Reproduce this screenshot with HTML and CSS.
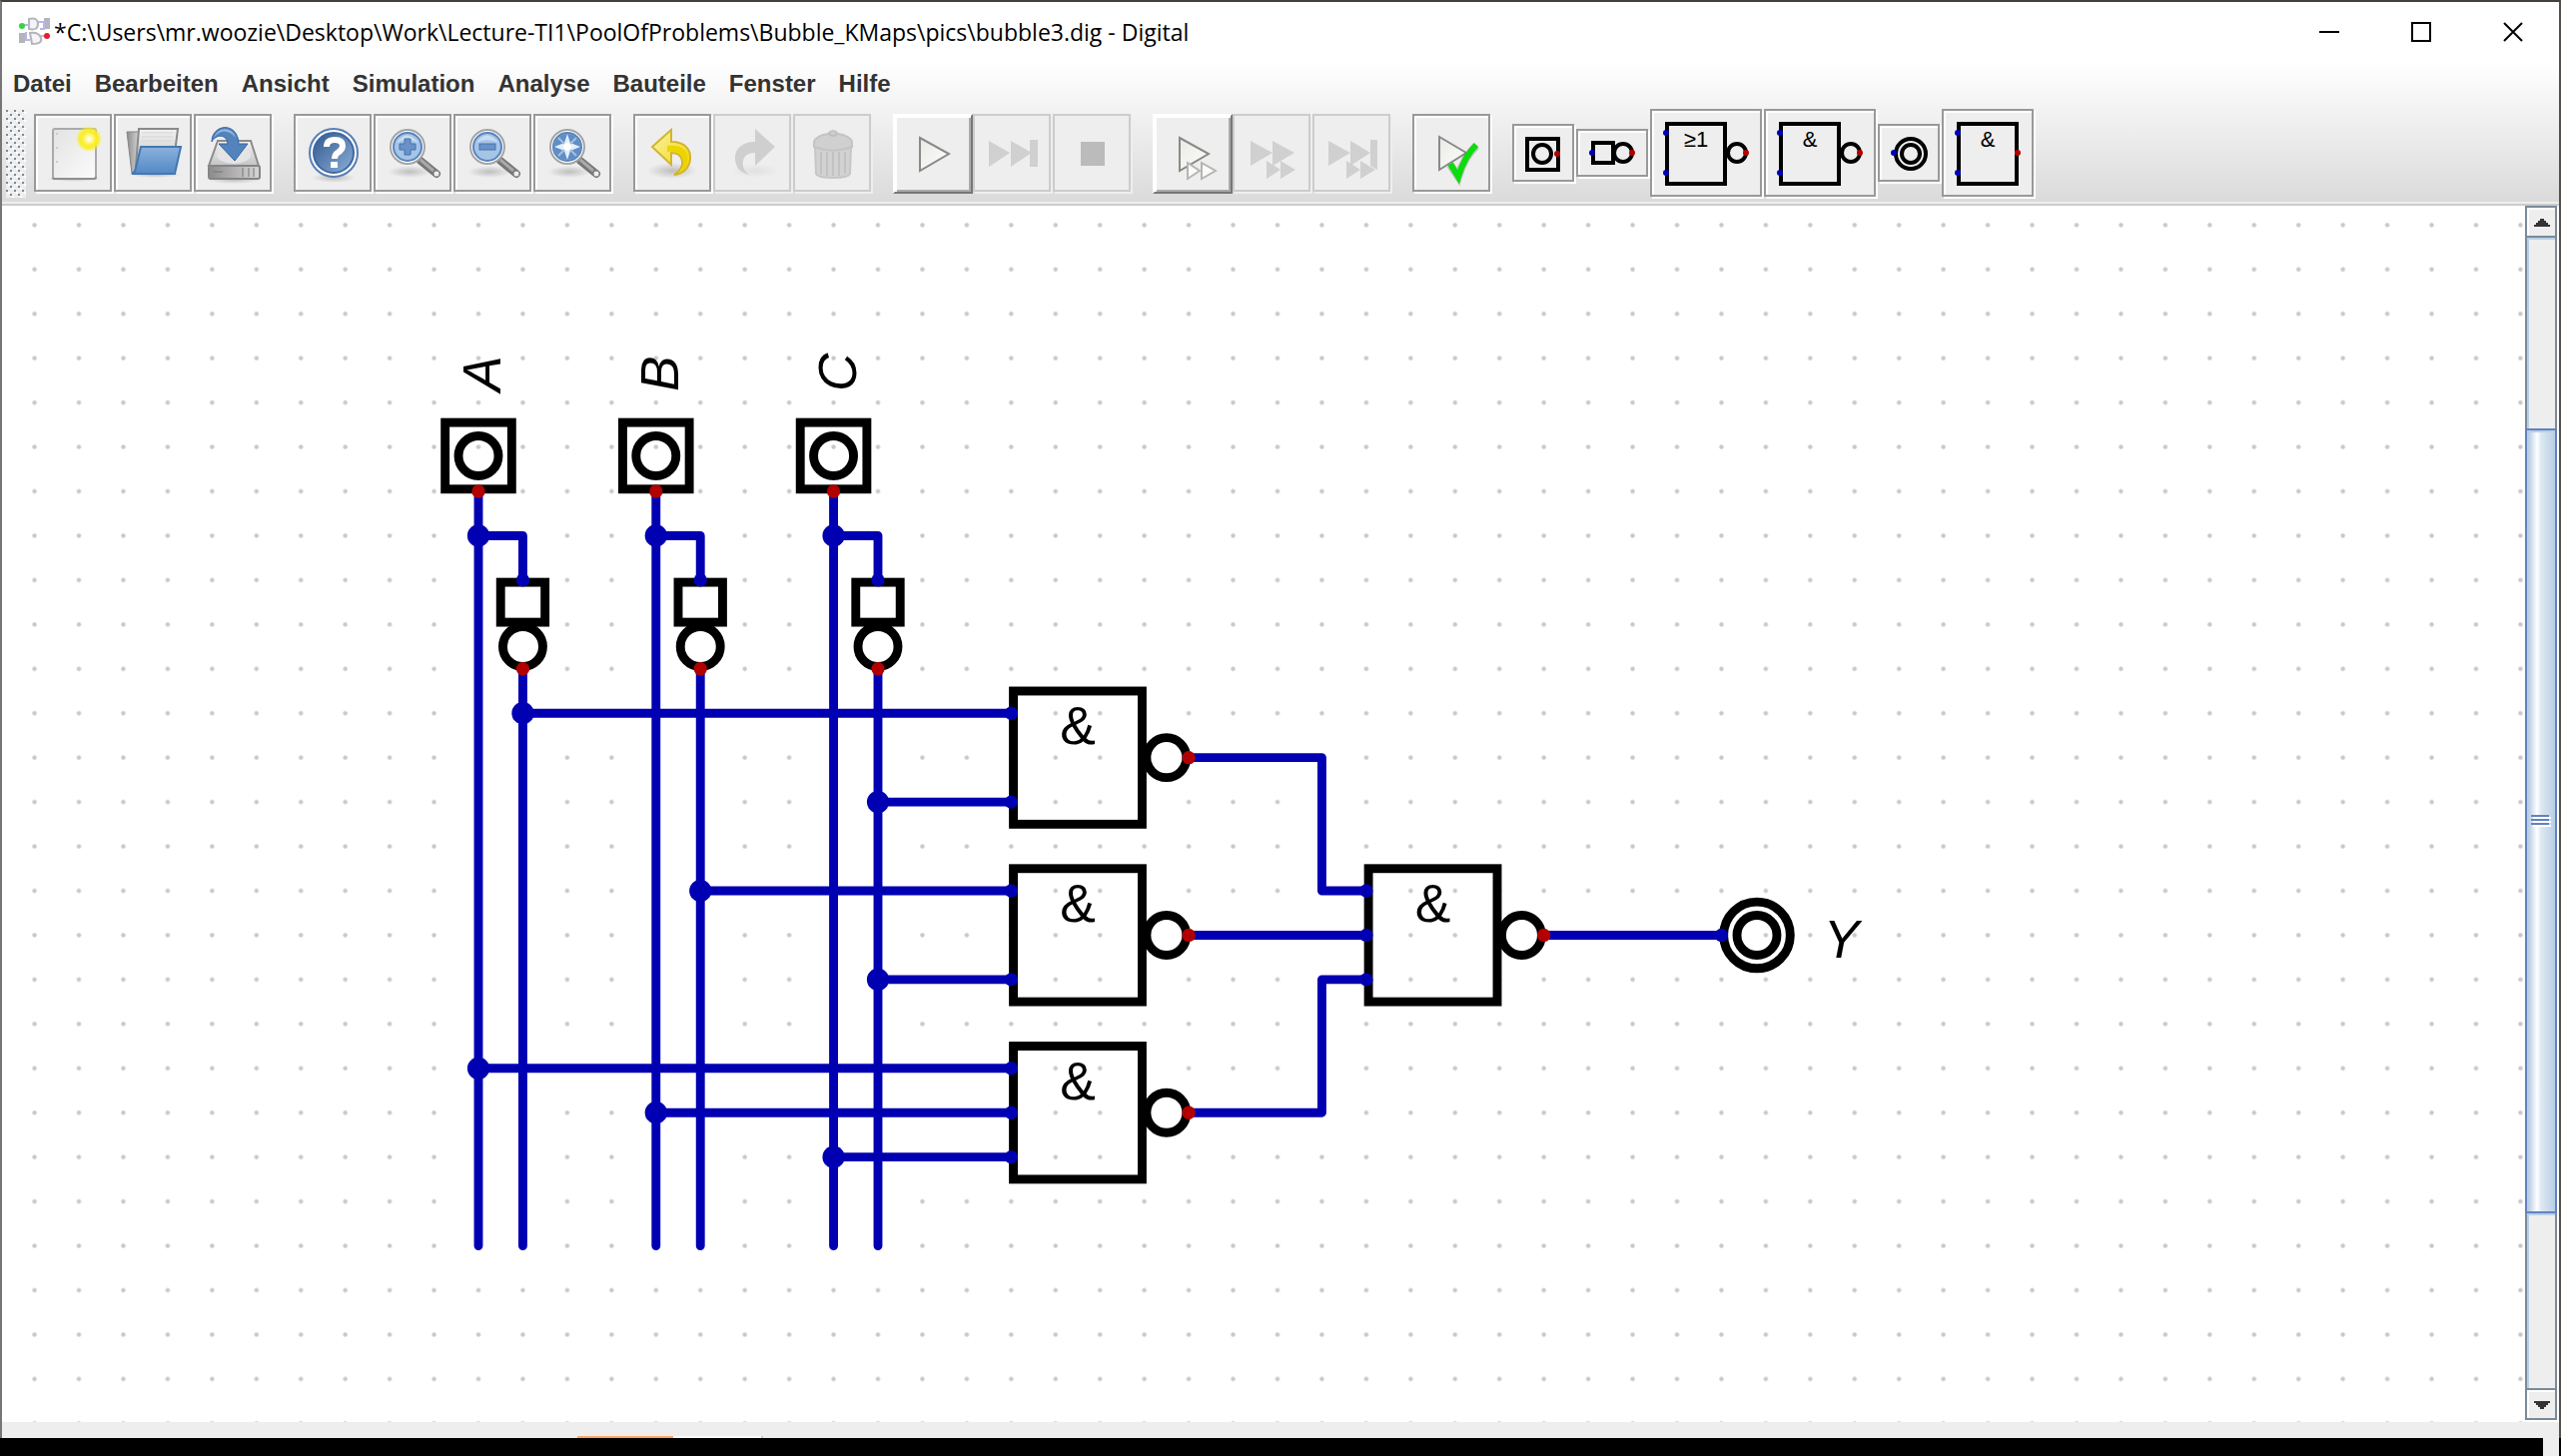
FILE: index.html
```html
<!DOCTYPE html>
<html lang="de">
<head>
<meta charset="utf-8">
<title>bubble3.dig - Digital</title>
<link rel="stylesheet" href="styles.css">
</head>
<body>
<div class="window">
  <header class="titlebar">
    <svg class="app-icon" width="34" height="32" viewBox="0 0 34 32" fill="none">
      <g stroke="#b4b4bc" stroke-width="2"><path d="M11 3q9-2 9 5t-9 5zM12 17q9-1 11 5t-9 6zM2 18h4v8H2zM27 3h4v9h-4z" fill="#f4f4f6"/><path d="M28 4v8M4 18v8" stroke-width="4"/></g>
      <path d="M6 9h5M20 6h6v7h-4M8 16v8h4M23 20h3" stroke="#b9b6ee" stroke-width="2"/>
      <circle cx="4" cy="10" r="3" fill="#35d343"/><circle cx="29" cy="20" r="3" fill="#e51d2d"/>
    </svg>
    <h1 class="title">*C:\Users\mr.woozie\Desktop\Work\Lecture-TI1\PoolOfProblems\Bubble_KMaps\pics\bubble3.dig - Digital</h1>
    <div class="win-controls">
      <button class="win-button" aria-label="Minimieren"><svg width="20" height="20"><path d="M0 10H20" stroke="#000" stroke-width="2"/></svg></button>
      <button class="win-button" aria-label="Maximieren"><svg width="20" height="20"><rect x="1" y="1" width="18" height="18" fill="none" stroke="#000" stroke-width="2"/></svg></button>
      <button class="win-button" aria-label="Schließen"><svg width="20" height="20"><path d="M1 1L19 19M19 1L1 19" stroke="#000" stroke-width="2"/></svg></button>
    </div>
  </header>

  <div class="bars">
    <nav class="menubar">
      <button class="menu">Datei</button>
      <button class="menu">Bearbeiten</button>
      <button class="menu">Ansicht</button>
      <button class="menu">Simulation</button>
      <button class="menu">Analyse</button>
      <button class="menu">Bauteile</button>
      <button class="menu">Fenster</button>
      <button class="menu">Hilfe</button>
    </nav>

    <div class="toolbar" role="toolbar">
      <svg class="handle" width="20" height="88" aria-hidden="true">
        <defs><pattern id="bumps" width="8" height="8" patternUnits="userSpaceOnUse">
          <path d="M0 0h2v2H0zM4 4h2v2H4z" fill="#7a8a99"/><path d="M2 2h2v2H2zM6 6h2v2H6z" fill="#fff"/>
        </pattern></defs>
        <rect width="20" height="88" fill="#eee"/><rect width="20" height="88" fill="url(#bumps)"/>
      </svg>

      <div class="group">
        <button class="tool" aria-label="Neu"><svg viewBox="0 0 78 78">
          <defs>
            <linearGradient id="paper" x2="1" y2="1"><stop stop-color="#e2e2e2"/><stop offset="1" stop-color="#fcfcfc"/></linearGradient>
            <radialGradient id="glow"><stop stop-color="#fff"/><stop offset=".3" stop-color="#fff68a"/><stop offset=".55" stop-color="#fbee20"/><stop offset=".75" stop-color="#fbee20" stop-opacity=".85"/><stop offset="1" stop-color="#fbee20" stop-opacity="0"/></radialGradient>
            <radialGradient id="shade"><stop stop-color="#000" stop-opacity=".2"/><stop offset="1" stop-color="#000" stop-opacity="0"/></radialGradient>
            <linearGradient id="blue" x2="0" y2="1"><stop stop-color="#8ab2dc"/><stop offset="1" stop-color="#5288c4"/></linearGradient>
            <linearGradient id="metal" x2="0" y2="1"><stop stop-color="#f2f2f2"/><stop offset="1" stop-color="#c4c4c4"/></linearGradient>
            <linearGradient id="steel"><stop stop-color="#8c8c8c"/><stop offset="1" stop-color="#d6d6d6"/></linearGradient>
            <linearGradient id="navy" x1="0" y1="0" x2="1" y2="1"><stop stop-color="#31588f"/><stop offset="1" stop-color="#8db0d8"/></linearGradient>
            <linearGradient id="gold" x2="1" y2="1"><stop stop-color="#fbf4a8"/><stop offset="1" stop-color="#edd400"/></linearGradient>
            <linearGradient id="white-metal" x2="1" y2="1"><stop stop-color="#e8eae4"/><stop offset="1" stop-color="#fff"/></linearGradient>
          </defs>
          <ellipse cx="40" cy="65" rx="27" ry="3" fill="url(#shade)"/>
          <rect x="19" y="15" width="43" height="50" rx="2" fill="url(#paper)" stroke="#aaa" stroke-width="2"/>
          <path d="M19 64q0 1 2 1h39q2 0 2-2" fill="none" stroke="#8e8e8e" stroke-width="2"/>
          <path d="M23 19v42" stroke="#ccc" stroke-width="2" stroke-dasharray="2 12"/>
          <circle cx="55" cy="25" r="13" fill="url(#glow)"/></svg></button>
        <button class="tool" aria-label="Öffnen"><svg viewBox="0 0 78 78">
          <ellipse cx="41" cy="61" rx="27" ry="3" fill="url(#shade)"/>
          <path d="M13 18h12v42h-7z" fill="url(#steel)" stroke="#858585"/>
          <path d="M25 15h39l-3 24L22 52z" fill="url(#metal)" stroke="#8a8a8a" stroke-width="2"/>
          <path d="M28 19h32M28 23h31M28 27h30" stroke="#d5d5d5"/>
          <path d="M27 33h40l-6 27H18q3-1 4-6z" fill="url(#blue)" stroke="#4377b3" stroke-width="2"/></svg></button>
        <button class="tool" aria-label="Speichern"><svg viewBox="0 0 78 78">
          <ellipse cx="40" cy="66" rx="28" ry="4" fill="url(#shade)"/>
          <path d="M24 27h33l8 25H15z" fill="url(#metal)" stroke="#8c8c8c" stroke-width="2"/>
          <ellipse cx="40" cy="41" rx="17" ry="9" fill="#e4e4e4"/>
          <rect x="15" y="52" width="51" height="13" rx="2" fill="url(#steel)" stroke="#858585" stroke-width="2"/>
          <path d="M19 58h10M49 54v9M55 54v9M60 54v9" stroke="#777"/>
          <path d="M18 28C18 10 44 7 45 30h9L41 47 25 30h9C33 20 22 20 18 28z" fill="#5283bd" stroke="#3465a4"/>
          <path d="M20 24C24 13 38 12 42 24C34 15 26 16 20 24z" fill="#94b5dc"/></svg></button>
      </div>

      <div class="group">
        <button class="tool" aria-label="Hilfe"><svg viewBox="0 0 78 78">
          <ellipse cx="40" cy="64" rx="22" ry="5" fill="url(#shade)"/>
          <circle cx="40" cy="39" r="24" fill="#fff" stroke="#587fb5" stroke-width="2"/>
          <circle cx="40" cy="39" r="20" fill="url(#navy)" stroke="#3c68a4" stroke-width="2"/>
          <path d="M33 33q0-7 8-7 8 0 8 6 0 4-5 7-3 2-3 6" fill="none" stroke="#fff" stroke-width="6"/><rect x="37" y="48" width="7" height="6" fill="#fff"/></svg></button>
        <button class="tool" aria-label="Vergrößern"><svg viewBox="0 0 78 78">
          <g id="lens"><ellipse cx="36" cy="58" rx="22" ry="6" fill="url(#shade)"/>
          <path d="M47 47L63 60" stroke="#777" stroke-width="8" stroke-linecap="round"/><path d="M47 46L60 57" stroke="#aaa" stroke-width="3"/>
          <circle cx="63" cy="60" r="3" fill="#eee" stroke="#888"/>
          <circle cx="34" cy="33" r="17" fill="#fff" stroke="#a5a5a5" stroke-width="2"/>
          <circle cx="34" cy="33" r="14" fill="#a6c4e6" stroke="#5784bd" stroke-width="2"/><path d="M23 29q10-15 22 0-12-6-22 0z" fill="#c9dcf1"/></g>
          <path d="M31 25h6v5h5v6h-5v5h-6v-5h-5v-6h5z" fill="#6993c8" stroke="#4473ae"/></svg></button>
        <button class="tool" aria-label="Verkleinern"><svg viewBox="0 0 78 78"><use href="#lens"/><rect x="26" y="30" width="16" height="6" fill="#6993c8" stroke="#4473ae"/></svg></button>
        <button class="tool" aria-label="Einpassen"><svg viewBox="0 0 78 78"><use href="#lens"/>
          <circle cx="34" cy="33" r="13" fill="#5f8dc6"/><path d="M34 20l3 9 10 4-10 4-3 9-3-9-10-4 10-4z" fill="#e4eefa"/><path d="M25 24l18 18M43 24L25 42" stroke="#a3c0e2" stroke-width="2"/><circle cx="34" cy="33" r="4" fill="#fff"/></svg></button>
      </div>

      <div class="group">
        <button class="tool" aria-label="Rückgängig"><svg viewBox="0 0 78 78">
          <ellipse cx="39" cy="57" rx="25" ry="8" fill="url(#shade)"/>
          <path d="M38 16v12c15 0 20 9 19 18-1 9-8 14-16 15 7-5 9-9 8-14-1-6-5-8-11-8v12L19 33z" fill="url(#gold)" stroke="#d3b52c" stroke-width="2"/>
          <path d="M34 32c16-2 23 6 20 18-1 4-4 6-6 8 4-8 2-13-1-17-3-3-8-4-13-3z" fill="#edd400"/></svg></button>
        <button class="tool" disabled aria-label="Wiederholen"><svg viewBox="0 0 78 78">
          <ellipse cx="42" cy="57" rx="24" ry="7" fill="url(#shade)" opacity=".3"/>
          <path d="M42 15v13c-15 0-21 9-20 18 1 9 6 13 14 15-6-5-7-9-6-14 1-5 5-8 12-8v13L62 33z" fill="#cfcfcf"/></svg></button>
        <button class="tool" disabled aria-label="Löschen"><svg viewBox="0 0 78 78">
          <path d="M22 32h36l-1 28q-2 4-17 4t-17-4z" fill="#d2d2d2" stroke="#c6c6c6" stroke-width="2"/>
          <path d="M28 38v22M34 38v24M40 38v24M46 38v24M52 38v22" stroke="#c2c2c2" stroke-width="2"/>
          <path d="M21 33v-5q2-6 14-8 5-6 10 0 12 2 14 8v5q-18 7-38 0z" fill="#d0d0d0" stroke="#c4c4c4" stroke-width="2"/><path d="M36 20q4 4 8 0" fill="none" stroke="#bdbdbd" stroke-width="2"/></svg></button>
      </div>

      <div class="group">
        <button class="tool raised" aria-label="Start"><svg viewBox="0 0 78 78"><path d="M27 23L56 39 27 56z" fill="url(#white-metal)" stroke="#888a85" stroke-width="2"/></svg></button>
        <button class="tool" disabled aria-label="Schritt"><svg viewBox="0 0 78 78"><path d="M16 27L37 39 16 53zM38 27L59 39 38 53zM57 26h8v27h-8z" fill="#d0d0d0"/></svg></button>
        <button class="tool" disabled aria-label="Stopp"><svg viewBox="0 0 78 78"><rect x="28" y="28" width="24" height="24" fill="#bbb"/></svg></button>
      </div>

      <div class="group">
        <button class="tool raised" aria-label="Schnell starten"><svg viewBox="0 0 78 78"><path d="M27 23L56 39 27 56z" fill="url(#white-metal)" stroke="#888a85" stroke-width="2"/><path d="M35 48l12 8-12 8zM49 48l14 8-14 8z" fill="#fafaf8" stroke="#b4b6b0" stroke-width="2"/></svg></button>
        <button class="tool" disabled aria-label="Schnelllauf"><svg viewBox="0 0 78 78"><path d="M18 27L40 39 18 52zM40 27L62 39 40 52zM34 47l14 9-14 9zM48 47l15 9-15 9z" fill="#d0d0d0"/></svg></button>
        <button class="tool" disabled aria-label="Lauf bis Halt"><svg viewBox="0 0 78 78"><path d="M16 27L38 39 16 52zM38 27L58 39 38 52zM58 26h7v30l-7-4zM34 47l14 9-14 9zM48 47l15 9-15 9z" fill="#d0d0d0"/></svg></button>
      </div>

      <div class="group">
        <button class="tool" aria-label="Tests ausführen"><svg viewBox="0 0 78 78"><path d="M27 23L54 39 27 56z" fill="url(#white-metal)" stroke="#888a85" stroke-width="2"/><path d="M38 51l8 12Q52 43 64 32" fill="none" stroke="#555" stroke-opacity=".3" stroke-width="8"/><path d="M38 50l8 13Q52 43 64 31" fill="none" stroke="#0bdc0b" stroke-width="6"/></svg></button>
      </div>

      <div class="group parts">
        <button class="part" aria-label="Eingang"><svg width="58" height="54" viewBox="2 2 58 54"><rect x="15" y="15" width="31" height="31"/><circle cx="30" cy="30" r="9"/><circle class="out" cx="45" cy="30" r="3"/></svg></button>
        <button class="part" aria-label="Nicht"><svg width="68" height="44" viewBox="2 2 68 44"><rect x="17" y="14" width="20" height="20"/><circle cx="47" cy="24" r="9"/><circle class="in" cx="16" cy="24" r="3"/><circle class="out" cx="56" cy="24" r="3"/></svg></button>
        <button class="part" aria-label="Nicht-Oder"><svg width="108" height="84" viewBox="2 2 108 84"><rect x="17" y="15" width="58" height="60"/><circle cx="87" cy="44" r="9"/><circle class="in" cx="16" cy="24" r="3"/><circle class="in" cx="16" cy="64" r="3"/><circle class="out" cx="96" cy="44" r="3"/><text x="46" y="38">≥1</text></svg></button>
        <button class="part" aria-label="Nicht-Und"><svg width="108" height="84" viewBox="2 2 108 84"><rect x="17" y="15" width="58" height="60"/><circle cx="87" cy="44" r="9"/><circle class="in" cx="16" cy="24" r="3"/><circle class="in" cx="16" cy="64" r="3"/><circle class="out" cx="96" cy="44" r="3"/><text x="46" y="38">&amp;</text></svg></button>
        <button class="part" aria-label="Ausgang"><svg width="58" height="54" viewBox="2 2 58 54"><circle cx="33" cy="30" r="15"/><circle cx="33" cy="30" r="9"/><circle class="in" cx="16" cy="29" r="3"/></svg></button>
        <button class="part" aria-label="Und"><svg width="88" height="84" viewBox="2 2 88 84"><rect x="17" y="15" width="58" height="60"/><circle class="in" cx="16" cy="24" r="3"/><circle class="in" cx="16" cy="64" r="3"/><circle class="out" cx="76" cy="44" r="3"/><text x="46" y="38">&amp;</text></svg></button>
      </div>
    </div>
  </div>

  <main class="workspace">
    <svg class="circuit" role="img" aria-label="Schaltung">
      <defs>
        <pattern id="grid" x="-10" y="-10" width="20" height="20" patternUnits="userSpaceOnUse"><circle cx="10" cy="10" r="1" fill="#c8c8c8"/></pattern>
        <g id="input"><rect x="-15" y="-31" width="30" height="30"/><circle cy="-16" r="9"/></g>
        <g id="inverter"><rect x="-10" y="1" width="20" height="18"/><circle cy="30" r="9"/></g>
        <g id="nand"><rect x="1" y="-30" width="58" height="60"/><circle cx="70" r="9"/></g>
      </defs>
      <g transform="translate(477 286) scale(2.2222)">
        <rect x="-300" y="-300" width="2400" height="1600" fill="url(#grid)"/>
        <g class="shape">
          <use href="#input" x="0"/><use href="#input" x="80"/><use href="#input" x="160"/>
          <use href="#inverter" x="20" y="40"/><use href="#inverter" x="100" y="40"/><use href="#inverter" x="180" y="40"/>
          <use href="#nand" x="240" y="120"/><use href="#nand" x="240" y="200"/><use href="#nand" x="240" y="280"/><use href="#nand" x="400" y="200"/>
          <circle cx="576" cy="200" r="15"/><circle cx="576" cy="200" r="9"/>
        </g>
        <path class="wire" d="M0 0V340M80 0V340M160 0V340M0 20H20V40M80 20H100V40M160 20H180V40M20 80V340M100 80V340M180 80V340M20 100H240M180 140H240M100 180H240M180 220H240M0 260H240M80 280H240M160 300H240M320 120H380V180H400M320 200H400M320 280H380V220H400M480 200H560"/>
        <g class="in">
          <circle cx="0" cy="20" r="5"/><circle cx="80" cy="20" r="5"/><circle cx="160" cy="20" r="5"/>
          <circle cx="20" cy="100" r="5"/><circle cx="180" cy="140" r="5"/><circle cx="100" cy="180" r="5"/><circle cx="180" cy="220" r="5"/>
          <circle cx="0" cy="260" r="5"/><circle cx="80" cy="280" r="5"/><circle cx="160" cy="300" r="5"/>
          <circle cx="20" cy="40" r="3"/><circle cx="100" cy="40" r="3"/><circle cx="180" cy="40" r="3"/>
          <circle cx="240" cy="100" r="3"/><circle cx="240" cy="140" r="3"/><circle cx="240" cy="180" r="3"/><circle cx="240" cy="220" r="3"/>
          <circle cx="240" cy="260" r="3"/><circle cx="240" cy="280" r="3"/><circle cx="240" cy="300" r="3"/>
          <circle cx="400" cy="180" r="3"/><circle cx="400" cy="200" r="3"/><circle cx="400" cy="220" r="3"/><circle cx="560" cy="200" r="3"/>
        </g>
        <g class="out">
          <circle cx="0" cy="0" r="3"/><circle cx="80" cy="0" r="3"/><circle cx="160" cy="0" r="3"/>
          <circle cx="20" cy="80" r="3"/><circle cx="100" cy="80" r="3"/><circle cx="180" cy="80" r="3"/>
          <circle cx="320" cy="120" r="3"/><circle cx="320" cy="200" r="3"/><circle cx="320" cy="280" r="3"/><circle cx="480" cy="200" r="3"/>
        </g>
        <g class="gate-label"><text x="270" y="114">&amp;</text><text x="270" y="194">&amp;</text><text x="270" y="274">&amp;</text><text x="430" y="194">&amp;</text></g>
        <g class="pin-label">
          <text transform="translate(10 -45) rotate(-90)">A</text><text transform="translate(90 -45) rotate(-90)">B</text><text transform="translate(170 -45) rotate(-90)">C</text>
          <text x="606" y="210">Y</text>
        </g>
      </g>
    </svg>
    <div class="scrollbar">
      <button class="scroll-button" aria-label="Nach oben"><svg width="16" height="8"><path d="M6 0h4v2h2v2h2v2h2v2H0V6h2V4h2V2h2z" fill="#333"/></svg></button>
      <div class="track"><div class="before"></div><div class="thumb"><svg width="20" height="12"><path d="M2 3H20M2 7H20M2 11H20" stroke="#fff" stroke-width="2"/><path d="M0 1H18M0 5H18M0 9H18" stroke="#6382bf" stroke-width="2"/></svg></div><div class="after"></div></div>
      <button class="scroll-button" aria-label="Nach unten"><svg width="16" height="8"><path d="M6 8h4V6h2V4h2V2h2V0H0v2h2v2h2v2h2z" fill="#333"/></svg></button>
    </div>
  </main>
  <footer class="status"><span class="accent"></span><span class="pale"></span></footer>
</div>
<div class="taskbar"></div>
</body>
</html>
```
FILE: styles.css
```css
* { box-sizing: border-box; }

body {
  margin: 0;
  min-height: 100vh;
  display: flex;
  flex-direction: column;
  background: #000;
  font-family: "Liberation Sans", Arial, sans-serif;
  overflow: hidden;
}

button {
  margin: 0;
  padding: 0;
  border: 0;
  background: none;
  font: inherit;
  color: inherit;
}

svg { display: block; }

.window {
  flex: 1;
  display: flex;
  flex-direction: column;
  border: 2px solid #55504a;
  border-left-color: #777;
  border-top-color: #45403b;
  border-bottom: 0;
  background: #fff;
}

/* Title bar */
.titlebar {
  display: flex;
  align-items: center;
  height: 60px;
  padding-left: 16px;
}

.app-icon { flex: none; margin-right: 2px; }

.title {
  flex: 1;
  margin: 0;
  font-family: "Open Sans", "Noto Sans", sans-serif;
  font-size: 23px;
  font-weight: 400;
  line-height: 32px;
  color: #000;
  white-space: nowrap;
}

.win-controls { display: flex; height: 100%; }

.win-button {
  width: 92px;
  display: flex;
  align-items: center;
  justify-content: center;
}

/* Menus and tools */
.bars {
  background: linear-gradient(#fff, #dadada);
  border-bottom: 2px solid #ccc;
  box-shadow: inset 0 -2px #eee;
  height: 144px;
}

.menubar {
  display: flex;
  gap: 23px;
  height: 46px;
  padding: 8px 11px 0;
}

.menu {
  height: 28px;
  font-size: 24px;
  font-weight: 700;
  line-height: 28px;
  color: #333;
}

.toolbar {
  display: flex;
  align-items: center;
  gap: 20px;
  height: 92px;
  padding-left: 4px;
}

.handle { margin-right: -12px; }

.group { display: flex; align-items: center; }

.tool,
.part {
  border: 2px solid #999;
  background: #eee;
  box-shadow: inset 2px 2px #fff, 2px 2px #fff;
  margin: 0 2px 2px 0;
}

.tool { width: 78px; height: 78px; }
.tool svg { width: 78px; height: 78px; margin: -2px; }

.tool:disabled {
  border-color: #ccc;
  box-shadow: 2px 2px #eee;
}

.raised {
  border-color: #fff #777 #777 #fff;
  width: 80px;
  height: 80px;
  margin: 0;
  box-shadow: inset 2px 2px #fff, inset -2px -2px #aaa;
}

.part rect, .part circle { fill: none; stroke: #000; stroke-width: 4px; }
.part .in { fill: #0000b2; stroke: none; }
.part .out { fill: #b20000; stroke: none; }
.part text { font-size: 22px; text-anchor: middle; }

/* Drawing area */
.workspace {
  flex: 1;
  display: flex;
  min-height: 0;
}

.circuit { flex: 1; min-width: 0; height: auto; }

.shape { fill: none; stroke: #000; stroke-width: 4px; }

.wire {
  fill: none;
  stroke: #0000b2;
  stroke-width: 4px;
  stroke-linecap: round;
  stroke-linejoin: round;
}

.in { fill: #0000b2; }
.out { fill: #b20000; }
.gate-label { font-size: 24px; text-anchor: middle; }
.pin-label { font-size: 24px; font-style: italic; }

/* Scroll bar */
.scrollbar {
  width: 32px;
  display: flex;
  flex-direction: column;
  margin: 0 2px 2px 0;
  border: 2px solid #7a8a99;
  border-width: 2px 0;
}

.scroll-button {
  height: 28px;
  display: flex;
  align-items: center;
  justify-content: center;
  padding: 2px 0 0 2px;
  border: solid #7a8a99;
  border-width: 0 2px;
  background: #eee;
  box-shadow: inset 2px 2px #fff;
}

.track {
  flex: 1;
  display: flex;
  flex-direction: column;
}

.before,
.after {
  border: 2px solid #7a8a99;
  border-bottom: 0;
  background: #eee;
  box-shadow: inset 2px 2px #b8cfe5;
}

.before { flex: 192; }
.after { flex: 176; border-width: 0 2px 2px; border-bottom: 2px solid #7a8a99; }

.thumb {
  flex: 788;
  display: flex;
  align-items: center;
  justify-content: center;
  border: 2px solid #6382bf;
  background: linear-gradient(90deg, #b8cfe5 2px, #dce7f2 6px, #fff 10px, #dde8f3 14px, #b8cfe5);
  box-shadow: inset 0 2px #b8cfe5;
}

/* Bottom edge */
.status {
  display: flex;
  align-items: flex-end;
  height: 16px;
  padding-left: 576px;
  background: #eee;
}

.accent { width: 96px; height: 2px; background: #f9a869; }
.pale { width: 90px; height: 2px; background: #fafafa; border-right: 2px solid #ccc; }

.taskbar {
  height: 18px;
  border: solid #eee;
  border-width: 0 16px 0 0;
  margin-right: 2px;
  background: #000;
}
```
